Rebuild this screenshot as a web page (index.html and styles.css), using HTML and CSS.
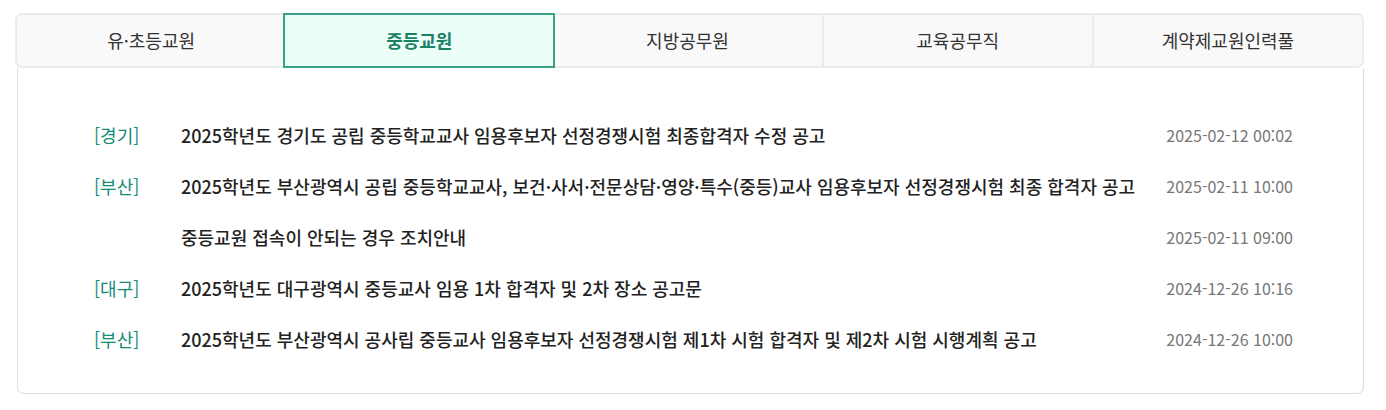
FILE: index.html
```html
<!DOCTYPE html>
<html lang="ko">
<head>
<meta charset="utf-8">
<link rel="stylesheet" href="styles.css">
</head>
<body>
<div class="board">
  <ul class="tabs">
    <li class="tab">유·초등교원</li>
    <li class="tab active">중등교원</li>
    <li class="tab">지방공무원</li>
    <li class="tab">교육공무직</li>
    <li class="tab">계약제교원인력풀</li>
  </ul>
  <div class="panel">
    <ul class="list">
      <li class="row"><span class="cat">[경기]</span><span class="title">2025학년도 경기도 공립 중등학교교사 임용후보자 선정경쟁시험 최종합격자 수정 공고</span><span class="date">2025-02-12 00:02</span></li>
      <li class="row"><span class="cat">[부산]</span><span class="title">2025학년도 부산광역시 공립 중등학교교사, 보건·사서·전문상담·영양·특수(중등)교사 임용후보자 선정경쟁시험 최종 합격자 공고</span><span class="date">2025-02-11 10:00</span></li>
      <li class="row"><span class="cat"></span><span class="title">중등교원 접속이 안되는 경우 조치안내</span><span class="date">2025-02-11 09:00</span></li>
      <li class="row"><span class="cat">[대구]</span><span class="title">2025학년도 대구광역시 중등교사 임용 1차 합격자 및 2차 장소 공고문</span><span class="date">2024-12-26 10:16</span></li>
      <li class="row"><span class="cat">[부산]</span><span class="title">2025학년도 부산광역시 공사립 중등교사 임용후보자 선정경쟁시험 제1차 시험 합격자 및 제2차 시험 시행계획 공고</span><span class="date">2024-12-26 10:00</span></li>
    </ul>
  </div>
</div>
</body>
</html>
```

FILE: styles.css
```css
* { box-sizing: border-box; }
html, body { margin: 0; padding: 0; background: #fff; }
body {
  font-family: "Noto Sans CJK KR", "Noto Sans", sans-serif;
  color: #222;
}
.board {
  padding: 13px 22px 0 15px;
  width: 1386px;
}
.tabs {
  list-style: none;
  margin: 0;
  padding: 0;
  display: flex;
  height: 55px;
  background: #f9f9f9;
  border: 2px solid #ebebeb;
  border-radius: 7px;
}
.tab {
  flex: 1;
  display: flex;
  align-items: center;
  justify-content: center;
  font-size: 18px;
  color: #333;
  border-left: 2px solid #ebebeb;
  margin-top: -2px;
  margin-bottom: -2px;
  padding-bottom: 1px;
}
.tab:first-child { border-left: none; }
.tab.active {
  background: #ebfef8;
  border: 2px solid #37a287;
  color: #1b8164;
  font-weight: 700;
  margin-left: -2px;
  margin-right: -2px;
}
.tab.active + .tab { border-left: none; }
.panel {
  margin: 0 0 0 2px;
  border: 1px solid #dcdcdc;
  border-top: none;
  border-radius: 0 0 7px 7px;
  padding: 41px 70px 29px 76px;
}
.list {
  list-style: none;
  margin: 0;
  padding: 0;
}
.row {
  display: flex;
  align-items: center;
  height: 51px;
}
.cat {
  flex: 0 0 87px;
  color: #168b77;
  font-size: 18px;
}
.title {
  flex: 1;
  min-width: 0;
  white-space: nowrap;
  overflow: hidden;
  text-overflow: ellipsis;
  font-size: 18px;
  font-weight: 500;
  color: #222;
}
.date {
  flex: 0 0 auto;
  margin-left: 30px;
  font-size: 16px;
  color: #777;
}
```
